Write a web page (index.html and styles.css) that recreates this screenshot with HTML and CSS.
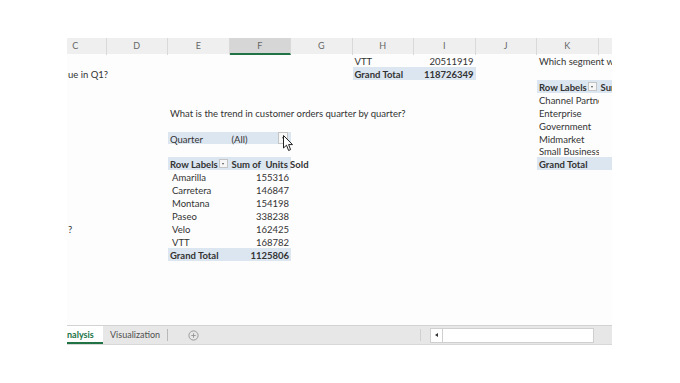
FILE: index.html
```html
<!DOCTYPE html>
<html lang="en">
<head>
    <meta charset="UTF-8">
    <title>Sales Analysis</title>
    <link rel="stylesheet" href="styles.css">
</head>
<body>
    <div class="excel">
        <div class="sheet">
            <div class="grid">
                <div class="colheads">
                    <span>C</span><span>D</span><span>E</span><span class="sel">F</span><span>G</span>
                    <span>H</span><span>I</span><span>J</span><span>K</span><span>L</span>
                </div>

                <div class="row">
                    <span class="cell c-h">VTT</span>
                    <span class="cell c-i num">20511919</span>
                    <span class="cell c-k">Which segment w</span>
                </div>
                <div class="row">
                    <span class="cell c-c lead">ue in Q1?</span>
                    <span class="cell c-h pv bold">Grand Total</span>
                    <span class="cell c-i pv bold num">118726349</span>
                </div>
                <div class="row">
                    <span class="cell c-k pv bold split">Row Labels <i class="dd"></i></span>
                    <span class="cell c-l pv bold">Sum of Profit</span>
                </div>
                <div class="row">
                    <span class="cell c-k clip">Channel Partners</span>
                    <span class="cell c-l num">1316803</span>
                </div>
                <div class="row">
                    <span class="cell c-e question">What is the trend in customer orders quarter by quarter?</span>
                    <span class="cell c-k clip">Enterprise</span>
                    <span class="cell c-l num">-614545</span>
                </div>
                <div class="row">
                    <span class="cell c-k clip">Government</span>
                    <span class="cell c-l num">11388173</span>
                </div>
                <div class="row">
                    <span class="cell c-e pv">Quarter</span>
                    <span class="cell c-f pv split filter">(All) <i class="dd big"></i>
                        <svg class="cursor" width="11" height="17" viewBox="0 0 11 17">
                            <path d="M0.5 0.5 L0.5 13 L3.5 10.2 L5.6 15.5 L7.6 14.6 L5.6 9.6 L9.5 9.6 Z" fill="#fff" stroke="#222" stroke-width="1" stroke-linejoin="round"/>
                        </svg>
                    </span>
                    <span class="cell c-k clip">Midmarket</span>
                    <span class="cell c-l num">660619</span>
                </div>
                <div class="row">
                    <span class="cell c-k clip">Small Business</span>
                    <span class="cell c-l num">4143168</span>
                </div>
                <div class="row">
                    <span class="cell c-e pv bold split">Row Labels <i class="dd"></i></span>
                    <span class="cell c-f pv bold">Sum of&nbsp; Units Sold</span>
                    <span class="cell c-k pv bold">Grand Total</span>
                    <span class="cell c-l pv bold num">16893702</span>
                </div>
                <div class="row">
                    <span class="cell c-e item">Amarilla</span>
                    <span class="cell c-f num">155316</span>
                </div>
                <div class="row">
                    <span class="cell c-e item">Carretera</span>
                    <span class="cell c-f num">146847</span>
                </div>
                <div class="row">
                    <span class="cell c-e item">Montana</span>
                    <span class="cell c-f num">154198</span>
                </div>
                <div class="row">
                    <span class="cell c-e item">Paseo</span>
                    <span class="cell c-f num">338238</span>
                </div>
                <div class="row">
                    <span class="cell c-c lead">?</span>
                    <span class="cell c-e item">Velo</span>
                    <span class="cell c-f num">162425</span>
                </div>
                <div class="row">
                    <span class="cell c-e item">VTT</span>
                    <span class="cell c-f num">168782</span>
                </div>
                <div class="row">
                    <span class="cell c-e pv bold">Grand Total</span>
                    <span class="cell c-f pv bold num">1125806</span>
                </div>
                <div class="row"></div>
                <div class="row"></div>
                <div class="row"></div>
                <div class="row"></div>
                <div class="row"></div>
            </div>
        </div>

        <div class="tabbar">
            <span class="tab active">nalysis</span>
            <span class="tab">Visualization</span>
            <span class="add">
                <svg width="11" height="11" viewBox="0 0 11 11">
                    <circle cx="5.5" cy="5.5" r="4.6" fill="none" stroke="#9a9a9a" stroke-width="1"/>
                    <path d="M5.5 3.3 V7.7 M3.3 5.5 H7.7" stroke="#9a9a9a" stroke-width="1"/>
                </svg>
            </span>
            <span class="spacer"></span>
            <span class="handle"></span>
            <span class="scroll">
                <span class="arrow"></span>
                <span class="track"></span>
            </span>
        </div>
    </div>
</body>
</html>
```

FILE: styles.css
```css
body {
    margin: 0;
    background: #fff;
    font-family: Lato, "Liberation Sans", Arial, sans-serif;
    font-size: 9.5px;
    color: #333;
}

.excel {
    width: 545px;
    margin: 38px 0 0 67px;
    background: #fdfdfd;
}

.sheet {
    height: 287px;
    overflow: hidden;
}

.grid {
    width: 615px;
    margin-left: -22px;
}

.colheads {
    display: grid;
    grid-template-columns: repeat(10, 61.5px);
    height: 16px;
    background: #efefef;
}

.colheads span {
    border-right: 1px solid #d9d9d9;
    text-align: center;
    line-height: 16px;
    font-size: 9px;
    color: #666;
}

.colheads span.sel {
    background: #d6d6d6;
    border-bottom: 2px solid #217346;
    line-height: 15px;
}

.row {
    display: grid;
    grid-template-columns: repeat(10, 61.5px);
    grid-template-rows: 12.93px;
    height: 12.93px;
    line-height: 15px;
}

.cell {
    grid-row: 1;
    padding: 0 2px;
    white-space: nowrap;
}

.c-c { grid-column: 1; }
.c-d { grid-column: 2; }
.c-e { grid-column: 3; }
.c-f { grid-column: 4; }
.c-g { grid-column: 5; }
.c-h { grid-column: 6; }
.c-i { grid-column: 7; }
.c-j { grid-column: 8; }
.c-k { grid-column: 9; }
.c-l { grid-column: 10; }

.num {
    text-align: right;
}

.bold {
    font-weight: bold;
}

.pv {
    background: #dce6f1;
}

.clip {
    overflow: hidden;
}

.lead {
    padding-left: 23px;
}

.item {
    padding-left: 4px;
}

.split {
    display: flex;
    justify-content: space-between;
    align-items: flex-start;
}

.filter {
    position: relative;
}

.dd {
    display: inline-block;
    align-self: center;
    width: 7px;
    height: 7px;
    border: 1px solid #c4c4c4;
    background: #f6f6f6;
    position: relative;
}

.dd::after {
    content: "";
    position: absolute;
    left: 2px;
    top: 3px;
    border-left: 1.5px solid transparent;
    border-right: 1.5px solid transparent;
    border-top: 2px solid #555;
}

.dd.big {
    width: 8px;
    height: 10px;
    margin-right: 1px;
}

.dd.big::after {
    left: 2.5px;
    top: 4px;
}

.cursor {
    position: absolute;
    left: 53px;
    top: 3px;
}

.tabbar {
    display: flex;
    align-items: center;
    height: 18px;
    border-top: 1px solid #d2d2d2;
    border-bottom: 1px solid #d8d8d8;
    background: #e7e7e7;
    font-size: 9px;
}

.tab {
    padding: 0 7px;
    color: #505050;
    border-right: 1px solid #b9b9b9;
    box-sizing: border-box;
    height: 12px;
    line-height: 12px;
}

.tab.active {
    height: 18px;
    line-height: 17px;
    width: 36px;
    padding: 0;
    background: #fff;
    color: #217346;
    font-weight: bold;
    border-right: none;
    border-bottom: 2px solid #217346;
}

.add {
    display: flex;
    margin-left: 20px;
}

.spacer {
    flex: 1;
}

.handle {
    width: 1px;
    height: 12px;
    background: #d0d0d0;
    margin-right: 9px;
}

.scroll {
    display: flex;
    height: 13px;
    width: 162px;
    margin-right: 18px;
    border: 1px solid #cfcfcf;
    background: #fff;
}

.arrow {
    width: 11px;
    border-right: 1px solid #cfcfcf;
    position: relative;
}

.arrow::after {
    content: "";
    position: absolute;
    left: 4px;
    top: 4px;
    border-top: 2.5px solid transparent;
    border-bottom: 2.5px solid transparent;
    border-right: 3px solid #333;
}

.track {
    flex: 1;
}
```
